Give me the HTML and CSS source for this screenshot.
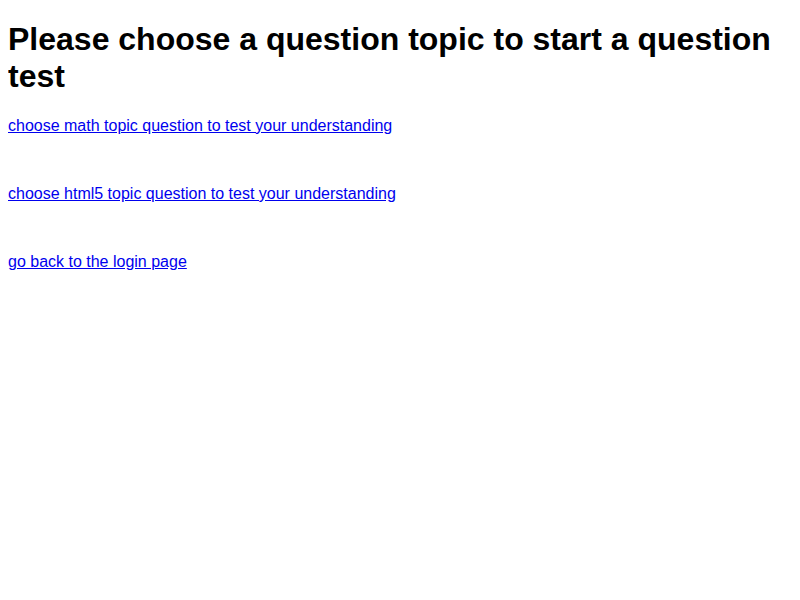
FILE: index.html
```html
<!DOCTYPE html>
<html lang="en">
<head>
<meta charset="utf-8">
<title>Choose a topic</title>
<link rel="stylesheet" href="styles.css">
</head>
<body>
<h1 class="title">Please choose a question topic to start a question test</h1>
<div class="topics">
  <p class="topic"><a href="#">choose math topic question to test your understanding</a></p>
  <p class="topic"><a href="#">choose html5 topic question to test your understanding</a></p>
  <p class="topic"><a href="#">go back to the login page</a></p>
</div>
</body>
</html>
```
FILE: styles.css
```css
body {
  margin: 8px;
  font-family: "Liberation Sans", Arial, sans-serif;
  font-size: 16px;
  color: #000;
  background: #fff;
}
.title {
  font-size: 32px;
  font-weight: bold;
  margin: 13.44px 0 21.44px;
}
.topics {
  display: flex;
  flex-direction: column;
  gap: 50px;
}
.topic {
  margin: 0;
}
.topic a {
  color: #0000ee;
  text-decoration: underline;
}
```
